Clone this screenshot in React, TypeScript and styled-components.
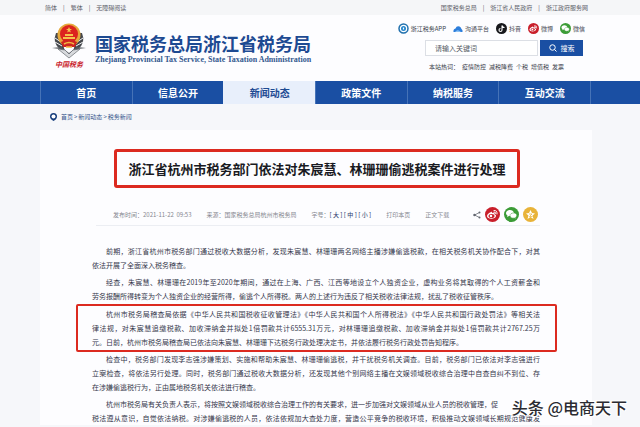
import React from "react";
import styled, { createGlobalStyle } from "styled-components";

const BLUE = "#1a4fa3";
const NAVY = "#1d4a92";
const RED = "#dc2a20";

const GlobalStyle = createGlobalStyle`
  * { box-sizing: border-box; }
  html { overflow: hidden; }
  body {
    margin: 0;
    background: #f6f7fa;
    color: #3c3f4c;
    font: 6px/10px "Noto Sans CJK SC", "Liberation Sans", sans-serif;
  }
  h1, p { margin: 0; }
  a { color: inherit; text-decoration: none; }
  button, input { font: inherit; color: inherit; }
  svg { display: block; flex: none; }
`;

const Page = styled.div`
  position: relative;
  min-height: 100vh;
  overflow: hidden;
`;

const TopBar = styled.div`
  display: flex;
  justify-content: space-between;
  align-items: center;
  height: 15px;
  padding: 0 52px 0 45px;
  background: #f5f6f8;
  color: #5d6069;
`;

const LinkList = styled.div`
  display: flex;
  align-items: center;
  a + a::before {
    content: "|";
    margin: 0 6px;
  }
`;

const Masthead = styled.header`
  display: flex;
  justify-content: space-between;
  height: 66px;
  padding: 7px 55px 0 51px;
  background: #fdfdff;
`;

const Brand = styled.a`
  display: flex;
  gap: 8px;
`;

const Emblem = styled.span`
  display: flex;
  flex-direction: column;
  align-items: center;
  width: 36px;
`;

const EmblemCaption = styled.span`
  color: #c9222b;
  font-size: 7px;
  line-height: 10px;
  font-weight: 700;
  font-style: italic;
`;

const BrandText = styled.span`
  display: flex;
  flex-direction: column;
  padding-top: 10px;
  white-space: nowrap;
`;

const BrandName = styled.span`
  color: ${NAVY};
  font-size: 18px;
  line-height: 23px;
  font-weight: 700;
`;

const BrandSub = styled.span`
  color: #34598f;
  font-family: "Liberation Serif", serif;
  font-size: 8px;
  line-height: 10px;
  font-weight: 700;
`;

const Tools = styled.div`
  display: flex;
  flex-direction: column;
  align-items: flex-end;
`;

const Channels = styled.div`
  display: flex;
  gap: 7px;
  height: 13px;
`;

const Channel = styled.a`
  display: flex;
  align-items: center;
  gap: 2px;
  white-space: nowrap;
`;

const Search = styled.form`
  display: flex;
  gap: 2px;
  width: 158px;
  height: 16px;
  margin: 5px 2px 0 0;
`;

const SearchInput = styled.input`
  flex: 1;
  min-width: 0;
  padding: 0 9px;
  border: 1px solid #dcdfe5;
  background: #fff;
  font-size: 7px;
  &::placeholder { color: #555a64; opacity: 1; }
`;

const SearchButton = styled.button`
  display: flex;
  align-items: center;
  justify-content: center;
  gap: 4px;
  width: 43px;
  padding: 0;
  border: 0;
  background: ${BLUE};
  color: #fff;
  font-size: 7px;
`;

const HotWords = styled.div`
  display: flex;
  gap: 3px;
  width: 156px;
  margin-top: 6px;
  white-space: nowrap;
`;

const Nav = styled.nav`
  padding: 0 49px 0 40px;
  background: ${BLUE};
`;

const NavList = styled.div`
  display: grid;
  grid-template-columns: repeat(6, 1fr);
  border-right: 1px solid #4673b7;
`;

const NavItem = styled.a<{ $active?: boolean }>`
  height: 23px;
  border-left: 1px solid ${(p) => (p.$active ? "#e8effb" : "#4673b7")};
  background: ${(p) => (p.$active ? "#e8effb" : "transparent")};
  color: ${(p) => (p.$active ? NAVY : "#fff")};
  font-size: 10px;
  line-height: 23px;
  font-weight: 700;
  text-align: center;
`;

const Crumbs = styled.div`
  display: flex;
  align-items: center;
  gap: 4px;
  height: 26px;
  padding-left: 50px;
  color: #35558b;
`;

const Trail = styled.span`
  display: flex;
  gap: 1px;
`;

const Card = styled.main`
  margin: 0 48px 0 40px;
  padding: 19px 35px 0 36px;
  background: #fdfdff;
`;

const Headline = styled.h1`
  margin: 0 37px 0 38px;
  border: 3px solid ${RED};
  border-radius: 3px;
  color: #191a22;
  font-size: 13px;
  line-height: 33px;
  font-weight: 700;
  text-align: center;
  white-space: nowrap;
`;

const Meta = styled.div`
  display: flex;
  align-items: center;
  gap: 15px;
  height: 22px;
  margin: 16px 17px 18px 20px;
  padding: 0 2px 0 17px;
  border-bottom: 1px solid #eceef3;
  color: #85878f;
  white-space: nowrap;
  b { color: #3b4c78; font-weight: 500; }
`;

const Share = styled.div`
  display: flex;
  align-items: center;
  gap: 4px;
  margin-left: auto;
`;

const Article = styled.article`
  display: flex;
  flex-direction: column;
  gap: 3px;
  color: #34364a;
  font-size: 7px;
  line-height: 14px;
`;

const Paragraph = styled.p`
  padding: 0 17px 0 16px;
`;

const Marked = styled.div`
  margin: -2px 0 -3px;
  padding: 1px 0;
  border: 2px solid ${RED};
  border-radius: 2px;
  ${Paragraph} { padding: 0 15px 0 14px; }
`;

const Line = styled.span<{ $full?: boolean }>`
  display: block;
  text-align: ${(p) => (p.$full ? "justify" : "left")};
  text-align-last: ${(p) => (p.$full ? "justify" : "left")};
  &:first-child { text-indent: 14px; }
`;

const Watermark = styled.div`
  position: absolute;
  right: 13px;
  bottom: 10px;
  color: #2b2b31;
  font-size: 16px;
  line-height: 20px;
  font-weight: 500;
  white-space: nowrap;
  text-shadow: -1px -1px 0 #fff, 1px -1px 0 #fff, -1px 1px 0 #fff, 1px 1px 0 #fff;
`;

const EmblemIcon = () => (
  <svg width="36" height="37" viewBox="0 0 36 37" aria-hidden="true">
    <path d="M5 11Q1 21 9 27L14 30L12 22Q6 18 8 11ZM31 11Q35 21 27 27L22 30L24 22Q30 18 28 11Z" fill="#45484d" />
    <path d="M4 16l6 4M4 20l7 4M32 16l-6 4M32 20l-7 4M7 10l3 5M29 10l-3 5" stroke="#f4f4f4" strokeWidth="1" />
    <circle cx="18" cy="13" r="11.5" fill="#e6a93b" />
    <circle cx="18" cy="12" r="9" fill="#dc241f" />
    <path d="M10 20q8-5 16 0l-2 5H12Z" fill="#cf2520" />
    <path d="M18 5l1 2h2l-2 1.500 1 2-2-1-2 1 1-2L15 7h2ZM12 15h12v2H12ZM14 12h8v2h-8Z" fill="#f4c34c" />
    <path d="M13 22q5-3 10 0M15 25h6" fill="none" stroke="#f1ba44" strokeWidth="1.500" />
    <path d="M1 26l9-1 8 6 8-6 9 1-8 1-9 7-9-7Z" fill="#55595f" />
    <path d="M7 27l7 1 4 4 4-4 7-1-11 9Z" fill="#d8dadd" stroke="#666a70" strokeWidth=".7" />
  </svg>
);

const TaxIcon = () => (
  <svg width="11" height="11" viewBox="0 0 22 22" aria-hidden="true">
    <circle cx="11" cy="11" r="9" fill="#fff" stroke="#2170ad" strokeWidth="3" />
    <circle cx="11" cy="11" r="5" fill="#2385cd" />
    <path d="M11 9v4" stroke="#fff" strokeWidth="2.500" />
  </svg>
);

const CloudIcon = () => (
  <svg width="10" height="8" viewBox="0 0 20 16" aria-hidden="true">
    <path d="M1 14Q0 8 5 7q2-6 8-4 3 1 4 5 3 2 2 6Z" fill="#2d7edb" />
    <path d="M4 14q5-7 12 0Z" fill="#8cc2f5" />
  </svg>
);

const TikTokIcon = () => (
  <svg width="11" height="11" viewBox="0 0 22 22" aria-hidden="true">
    <circle cx="11" cy="11" r="11" fill="#17181c" />
    <path d="M12 5v9a3 3 0 1 1-3-3M12 5q1 4 5 4" fill="none" stroke="#fff" strokeWidth="2.200" />
  </svg>
);

const WeiboIcon = ({ size }: { size: number }) => (
  <svg width={size} height={size} viewBox="0 0 30 30" aria-hidden="true">
    <circle cx="15" cy="15" r="15" fill="#c91f2b" />
    <path d="M12 10c-4 1-8 5-8 8 0 7 17 7 18 0 0-2-1-3-3-3 1-4-2-4-5-3 0-1 0-3-2-2Z" fill="#fff" />
    <ellipse cx="13" cy="18" rx="6" ry="4" fill="#c91f2b" />
    <circle cx="12" cy="18" r="2.500" fill="#fff" />
    <path d="M18 7q7-1 6 7M18 10q4-1 3 3" fill="none" stroke="#fff" strokeWidth="2" strokeLinecap="round" />
  </svg>
);

const WeChatIcon = ({ size }: { size: number }) => (
  <svg width={size} height={size} viewBox="0 0 30 30" aria-hidden="true">
    <circle cx="15" cy="15" r="15" fill="#3c9c37" />
    <path d="M12 6c-5 0-8 3-8 6 0 2 1 4 3 5l-1 3 4-2c8 1 11-2 10-6-1-4-4-6-8-6Z" fill="#fff" />
    <path d="M19 12c-4 0-7 2-7 5 0 4 4 6 9 5l3 2-1-3c5-4 2-9-4-9Z" fill="#fff" stroke="#3c9c37" />
  </svg>
);

const StarIcon = () => (
  <svg width="15" height="15" viewBox="0 0 30 30" aria-hidden="true">
    <circle cx="15" cy="15" r="15" fill="#e8b339" />
    <path d="M15 6l3 6 6 1-5 4 2 7-6-4-6 4 2-7-5-4 6-1Z" fill="#fff" />
    <path d="M12 14h6l-5 5h6" fill="none" stroke="#e8b339" strokeWidth="1.500" />
  </svg>
);

const ShareIcon = () => (
  <svg width="8" height="8" viewBox="0 0 16 16" aria-hidden="true">
    <path d="M13 3L3 8l10 5" fill="none" stroke="#62666f" strokeWidth="1.500" />
    <circle cx="13" cy="3" r="2" fill="#62666f" />
    <circle cx="3" cy="8" r="2.500" fill="#62666f" />
    <circle cx="13" cy="13" r="2" fill="#62666f" />
  </svg>
);

const SearchIcon = () => (
  <svg width="8" height="8" viewBox="0 0 16 16" aria-hidden="true">
    <circle cx="7" cy="7" r="5.500" fill="none" stroke="#fff" strokeWidth="2" />
    <path d="M11 11l4 4" stroke="#fff" strokeWidth="2" />
  </svg>
);

const PinIcon = () => (
  <svg width="7" height="8" viewBox="0 0 14 16" aria-hidden="true">
    <path d="M7 0a7 7 0 0 1 7 7q0 5-7 9-7-4-7-9a7 7 0 0 1 7-7Z" fill="#173e7c" />
    <circle cx="7" cy="7" r="4" fill="#fff" />
  </svg>
);

const navItems = ["首页", "信息公开", "新闻动态", "政策文件", "纳税服务", "互动交流"];
const hotWords = ["疫情防控", "减税降费", "个税", "增值税", "发票"];

const Text = ({ lines, full }: { lines: string[]; full: number[] }) => (
  <Paragraph>
    {lines.map((line, i) => (
      <Line key={line} $full={full.includes(i)}>{line}</Line>
    ))}
  </Paragraph>
);

export default function App() {
  return (
    <Page>
      <GlobalStyle />
      <TopBar>
        <LinkList>
          <a href="#simplified">简体</a>
          <a href="#traditional">繁体</a>
          <a href="#accessible">无障碍阅读</a>
        </LinkList>
        <LinkList>
          <a href="#state">国家税务总局</a>
          <a href="#province">浙江省人民政府</a>
          <a href="#services">浙江政府服务网</a>
        </LinkList>
      </TopBar>

      <Masthead>
        <Brand href="#home">
          <Emblem>
            <EmblemIcon />
            <EmblemCaption>中国税务</EmblemCaption>
          </Emblem>
          <BrandText>
            <BrandName>国家税务总局浙江省税务局</BrandName>
            <BrandSub>Zhejiang Provincial Tax Service, State Taxation Administration</BrandSub>
          </BrandText>
        </Brand>
        <Tools>
          <Channels>
            <Channel href="#app"><TaxIcon />浙江税务APP</Channel>
            <Channel href="#talk"><CloudIcon />沟通平台</Channel>
            <Channel href="#douyin"><TikTokIcon />抖音</Channel>
            <Channel href="#weibo"><WeiboIcon size={11} />微博</Channel>
            <Channel href="#wechat"><WeChatIcon size={11} />微信</Channel>
          </Channels>
          <Search onSubmit={(e) => e.preventDefault()}>
            <SearchInput aria-label="关键词" placeholder="请输入关键词" />
            <SearchButton type="submit"><SearchIcon />搜索</SearchButton>
          </Search>
          <HotWords>
            <span>本站热词：</span>
            {hotWords.map((w) => <a key={w} href="#hot">{w}</a>)}
          </HotWords>
        </Tools>
      </Masthead>

      <Nav>
        <NavList>
          {navItems.map((item) => (
            <NavItem key={item} href="#nav" $active={item === "新闻动态"}>{item}</NavItem>
          ))}
        </NavList>
      </Nav>

      <Crumbs>
        <PinIcon />
        <Trail>
          <a href="#home">首页</a>
          <span>&gt;</span>
          <a href="#news">新闻动态</a>
          <span>&gt;</span>
          <a href="#tax">税务新闻</a>
        </Trail>
      </Crumbs>

      <Card>
        <Headline>浙江省杭州市税务部门依法对朱宸慧、林珊珊偷逃税案件进行处理</Headline>
        <Meta>
          <span>发布时间：2021-11-22&nbsp; 09:53</span>
          <span>来源：国家税务总局杭州市税务局</span>
          <span>字号：<b>[ 大 ] [ 中 ] [ 小 ]</b></span>
          <a href="#print">打印本页</a>
          <a href="#download">正文下载</a>
          <Share>
            <ShareIcon />
            <a href="#weibo" aria-label="微博"><WeiboIcon size={15} /></a>
            <a href="#wechat" aria-label="微信"><WeChatIcon size={15} /></a>
            <a href="#favourite" aria-label="收藏"><StarIcon /></a>
          </Share>
        </Meta>
        <Article>
          <Text full={[0]} lines={[
            "前期，浙江省杭州市税务部门通过税收大数据分析，发现朱宸慧、林珊珊两名网络主播涉嫌偷逃税款，在相关税务机关协作配合下，对其",
            "依法开展了全面深入税务稽查。",
          ]} />
          <Text full={[0]} lines={[
            "经查，朱宸慧、林珊珊在2019年至2020年期间，通过在上海、广西、江西等地设立个人独资企业，虚构业务将其取得的个人工资薪金和",
            "劳务报酬所得转变为个人独资企业的经营所得，偷逃个人所得税。两人的上述行为违反了相关税收法律法规，扰乱了税收征管秩序。",
          ]} />
          <Marked>
            <Text full={[0, 1]} lines={[
              "杭州市税务局稽查局依据《中华人民共和国税收征收管理法》《中华人民共和国个人所得税法》《中华人民共和国行政处罚法》等相关法",
              "律法规，对朱宸慧追缴税款、加收滞纳金并拟处1倍罚款共计6555.31万元，对林珊珊追缴税款、加收滞纳金并拟处1倍罚款共计2767.25万",
              "元。日前，杭州市税务局稽查局已依法向朱宸慧、林珊珊下达税务行政处理决定书，并依法履行税务行政处罚告知程序。",
            ]} />
          </Marked>
          <Text full={[0, 1]} lines={[
            "检查中，税务部门发现李志强涉嫌策划、实施和帮助朱宸慧、林珊珊偷逃税，并干扰税务机关调查。目前，税务部门已依法对李志强进行",
            "立案检查，将依法另行处理。同时，税务部门通过税收大数据分析，还发现其他个别网络主播在文娱领域税收综合治理中自查自纠不到位、存",
            "在涉嫌偷逃税行为，正由属地税务机关依法进行稽查。",
          ]} />
          <Text full={[1]} lines={[
            "杭州市税务局有关负责人表示，将按照文娱领域税收综合治理工作的有关要求，进一步加强对文娱领域从业人员的税收管理，促",
            "税法遵从意识，自觉依法纳税。对涉嫌偷逃税的人员，依法依规加大查处力度，营造公平竞争的税收环境，积极推动文娱领域长期规范健康发",
          ]} />
        </Article>
      </Card>
      <Watermark>头条 @电商天下</Watermark>
    </Page>
  );
}
